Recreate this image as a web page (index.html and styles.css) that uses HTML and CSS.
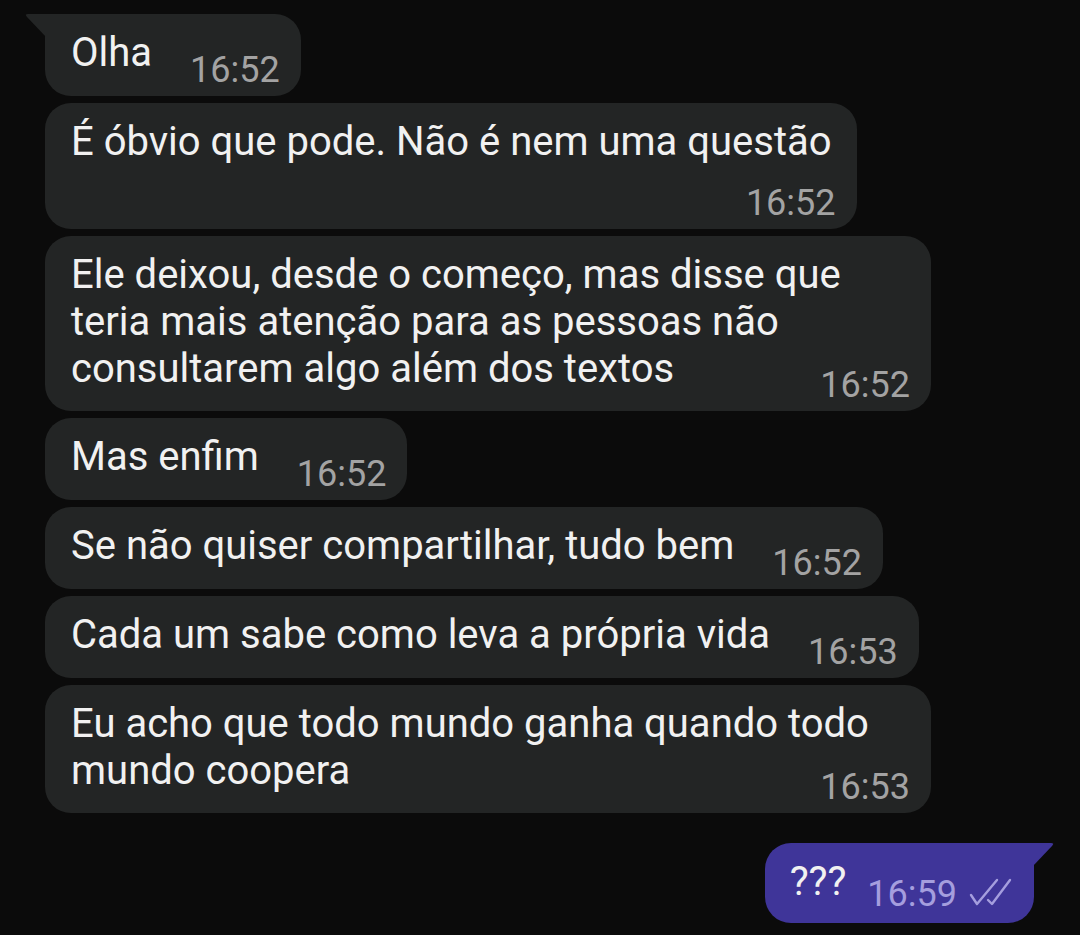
FILE: index.html
```html
<!DOCTYPE html>
<html lang="pt">
<head>
<meta charset="utf-8">
<title>Chat</title>
<link rel="stylesheet" href="styles.css">
</head>
<body>
<div class="chat">
  <div class="bubble in tail-left row">
    <span class="text">Olha</span>
    <span class="time">16:52</span>
  </div>
  <div class="bubble in col fit">
    <span class="text">É óbvio que pode. Não é nem uma questão</span>
    <span class="time below">16:52</span>
  </div>
  <div class="bubble in col full">
    <span class="text">Ele deixou, desde o começo, mas disse que<br>teria mais atenção para as pessoas não<br>consultarem algo além dos textos</span>
    <span class="time overlap">16:52</span>
  </div>
  <div class="bubble in row">
    <span class="text">Mas enfim</span>
    <span class="time">16:52</span>
  </div>
  <div class="bubble in row">
    <span class="text">Se não quiser compartilhar, tudo bem</span>
    <span class="time">16:52</span>
  </div>
  <div class="bubble in row">
    <span class="text">Cada um sabe como leva a própria vida</span>
    <span class="time">16:53</span>
  </div>
  <div class="bubble in col full">
    <span class="text">Eu acho que todo mundo ganha quando todo<br>mundo coopera</span>
    <span class="time overlap">16:53</span>
  </div>
  <div class="bubble out tail-right row">
    <span class="text">???</span>
    <span class="time">16:59
      <svg class="ticks" width="44" height="30" viewBox="0 0 44 30" aria-hidden="true">
        <path d="M3 18 L9 27 L29 3" />
        <path d="M20 23 L24 27 L42 3" />
      </svg>
    </span>
  </div>
</div>
</body>
</html>
```
FILE: styles.css
```css
html, body {
  margin: 0;
  padding: 0;
  background: #0b0b0b;
  height: 935px;
  overflow: hidden;
}

body {
  font-family: Roboto, "Noto Sans", "Liberation Sans", sans-serif;
}

.chat {
  display: flex;
  flex-direction: column;
  gap: 7px;
  padding: 14px 46px 0 45px;
}

.bubble {
  position: relative;
  box-sizing: border-box;
  border-radius: 26px;
  padding: 15px 21px 9px 26px;
  color: #f1f1f1;
}

.bubble.in {
  align-self: flex-start;
  background: #232525;
}

.bubble.out {
  align-self: flex-end;
  background: #3f3599;
  margin-top: 23px;
  padding: 15px 22px 12px 25px;
}

.row {
  display: flex;
  align-items: flex-end;
  gap: 38px;
}

.out.row {
  gap: 21px;
}

.col {
  display: flex;
  flex-direction: column;
}

.col.fit {
  padding-right: 25px;
}

.full {
  width: 886px;
}

.text {
  font-size: 40px;
  line-height: 47px;
  white-space: nowrap;
}

.row .text {
  margin-bottom: 11px;
}

.out.row .text {
  margin-bottom: 6px;
}

.time {
  font-size: 36px;
  line-height: 34px;
  color: #a3a3a3;
  white-space: nowrap;
  display: flex;
  align-items: center;
  gap: 11px;
}

.col .time {
  align-self: flex-end;
}

.time.below {
  margin-top: 21px;
  margin-right: -4px;
}

.time.overlap {
  margin-top: -24px;
}

.out .time {
  color: #a59ede;
}

.ticks {
  display: block;
  margin-top: -4px;
}

.ticks path {
  fill: none;
  stroke: #a59ede;
  stroke-width: 2.4;
  stroke-linecap: round;
  stroke-linejoin: round;
}

.tail-left {
  border-top-left-radius: 0;
}

.tail-left::before {
  content: "";
  position: absolute;
  left: -20px;
  top: 0;
  width: 21px;
  height: 23px;
  background: #232525;
  clip-path: polygon(0 0, 100% 0, 100% 100%, 2px 3px);
  border-top-left-radius: 3px;
}

.tail-right {
  border-top-right-radius: 0;
}

.tail-right::after {
  content: "";
  position: absolute;
  right: -20px;
  top: 0;
  width: 21px;
  height: 23px;
  background: #3f3599;
  clip-path: polygon(0 0, 100% 0, calc(100% - 2px) 3px, 0 100%);
  border-top-right-radius: 3px;
}
```
